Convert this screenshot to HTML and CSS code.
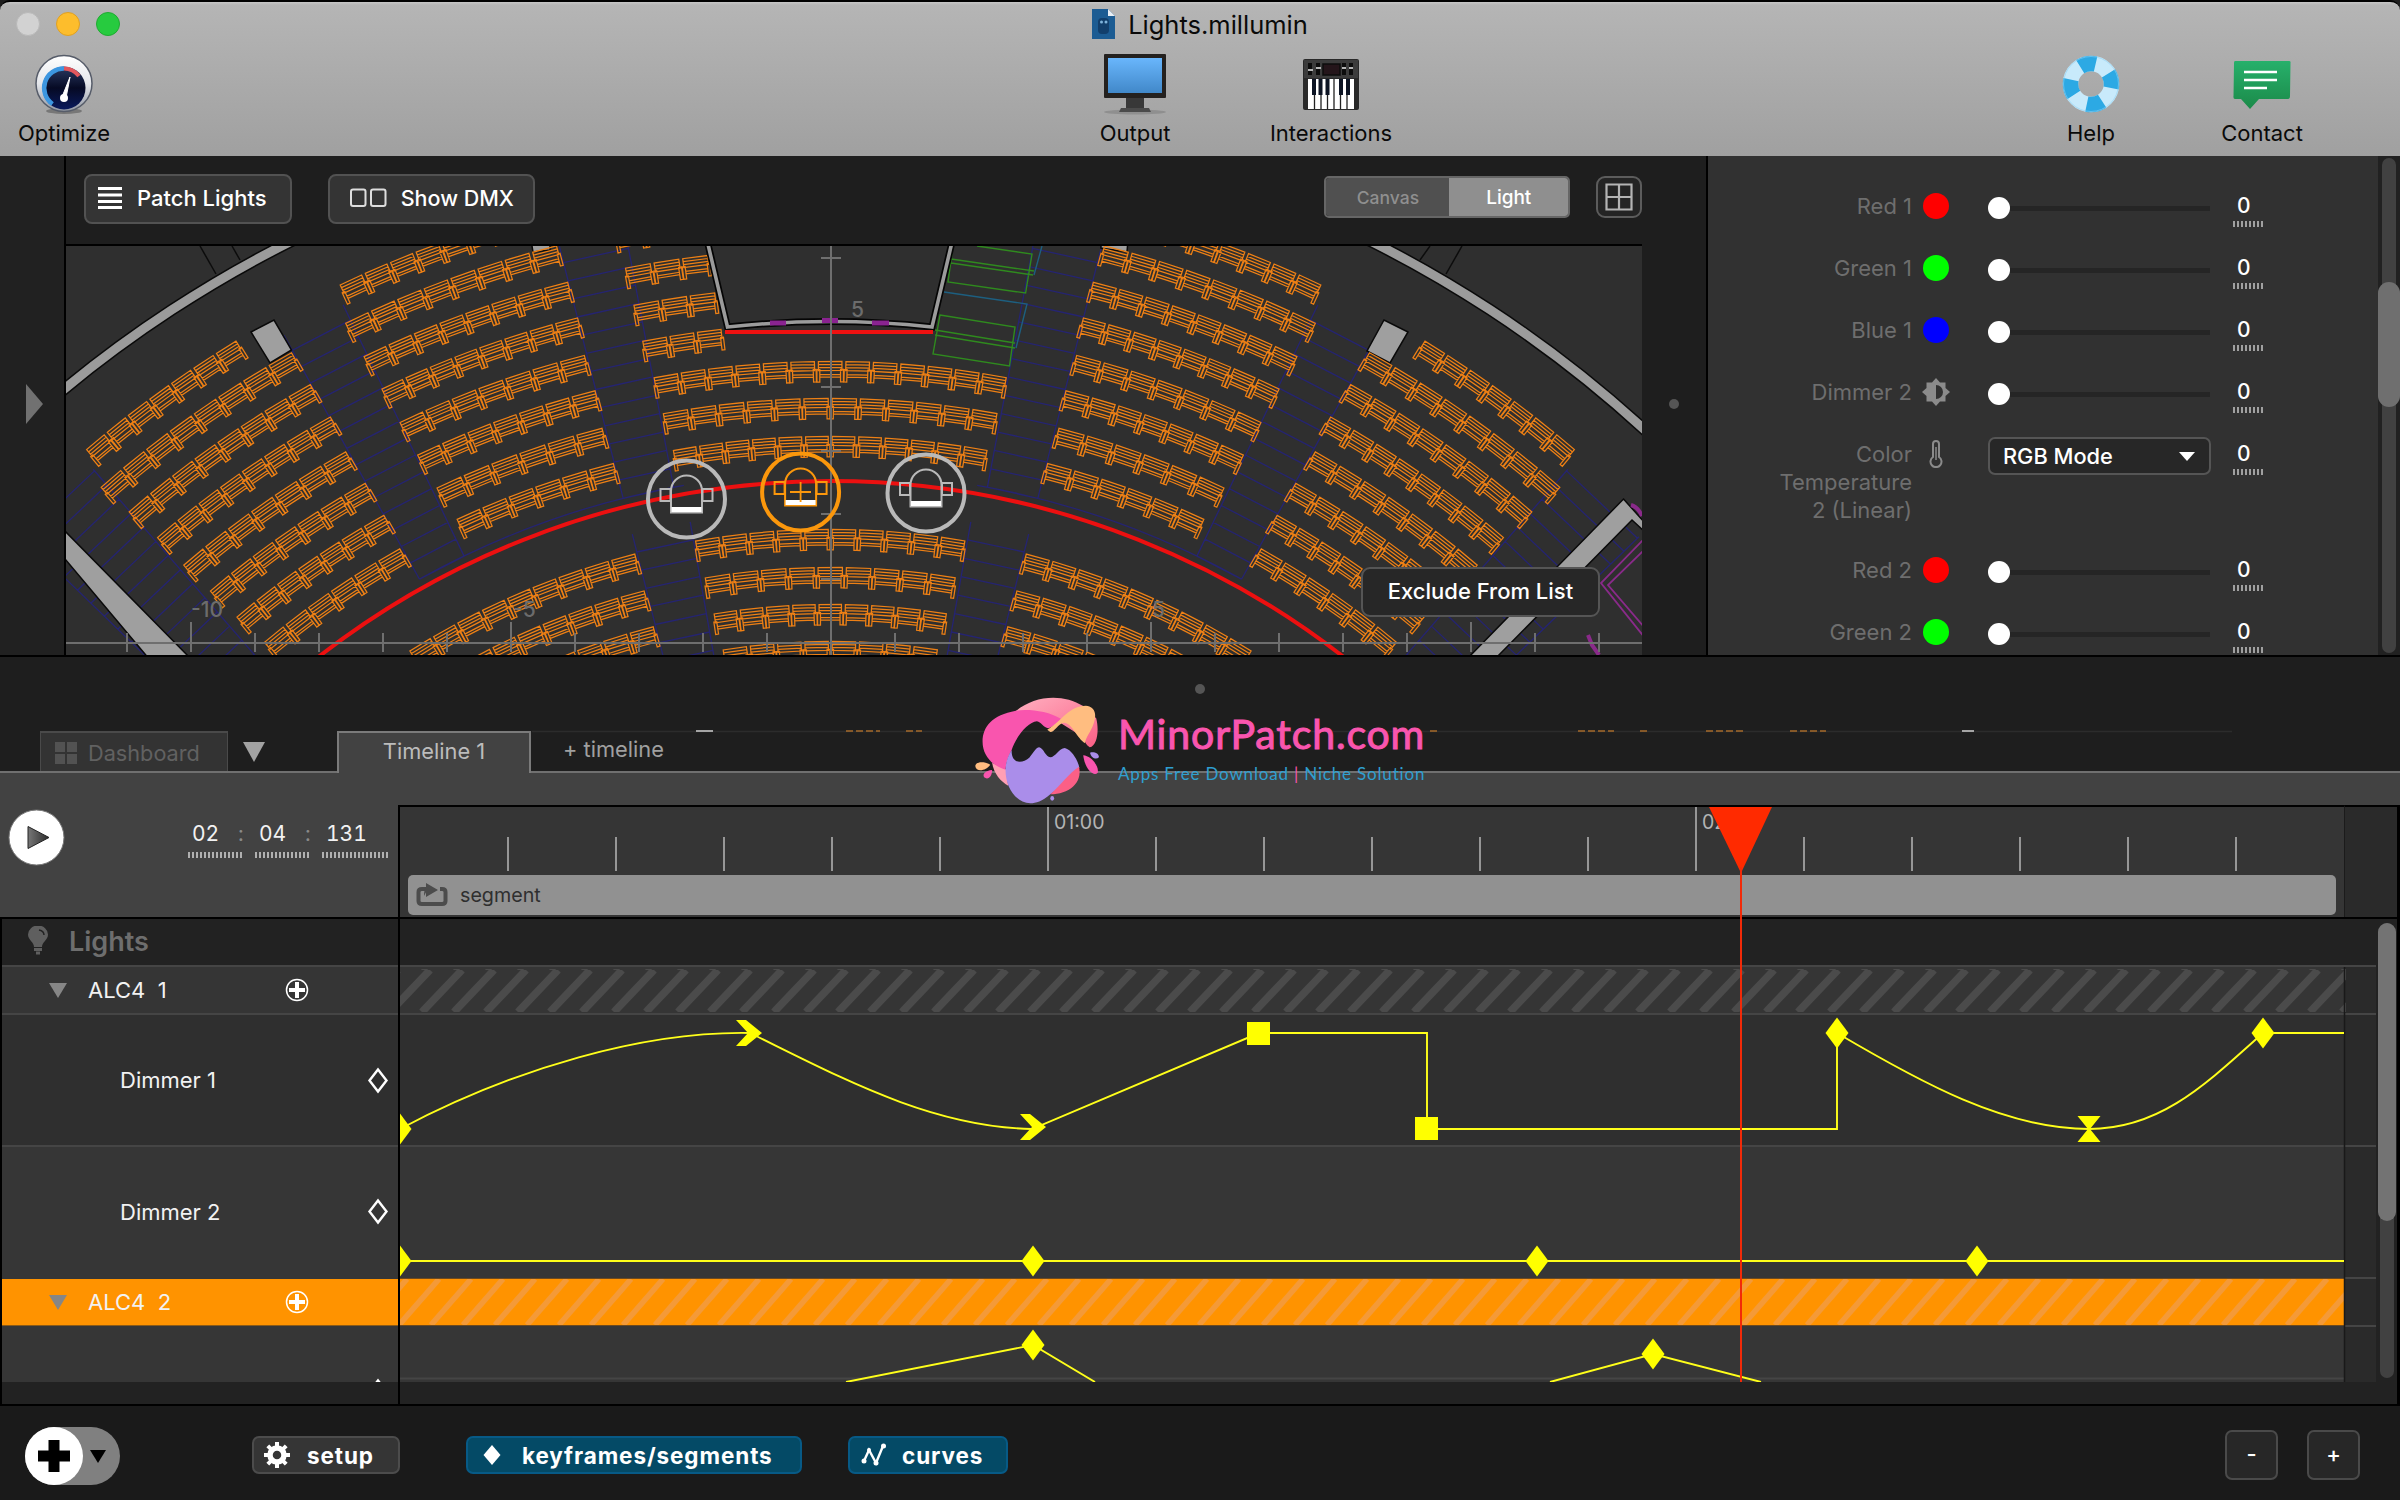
FILE: index.html
```html
<!DOCTYPE html>
<html lang="en">
<head>
<meta charset="utf-8">
<title>Lights.millumin</title>
<link rel="stylesheet" href="styles.css">
</head>
<body>
<div class="window">
  <header class="titlebar">
    <div class="title-row">
      <div class="traffic"><i class="close"></i><i class="min"></i><i class="max"></i></div>
      <div class="title">
        <svg width="24" height="30" viewBox="0 0 24 30"><path d="M0 0H16L23 7V30H0Z" fill="#1c5c93"/><path d="M16 0L23 7H16Z" fill="#e8eef4"/><rect x="6" y="9" width="11" height="16" rx="4" fill="#123f6c"/><circle cx="9.500" cy="13" r="1.500" fill="#7fb4dc"/><circle cx="14" cy="13" r="1.500" fill="#7fb4dc"/></svg>
        <span>Lights.millumin</span>
      </div>
      <div></div>
    </div>
    <nav class="tools">
      <div class="tool optimize">
        <svg width="60" height="62" viewBox="0 0 60 62"><defs><linearGradient id="rim" x2="0" y2="1"><stop offset="0" stop-color="#fff"/><stop offset=".5" stop-color="#e4e6ea"/><stop offset="1" stop-color="#9096a2"/></linearGradient><linearGradient id="dial" x2="0" y2="1"><stop offset="0" stop-color="#2a3a63"/><stop offset=".5" stop-color="#060a24"/><stop offset="1" stop-color="#0a1a5c"/></linearGradient></defs><ellipse cx="30" cy="58" rx="18" ry="3" fill="#777"/><circle cx="30" cy="30.500" r="28" fill="url(#rim)" stroke="#565c69" stroke-width="1.500"/><circle cx="30" cy="35" r="21.500" fill="url(#dial)"/><path d="M18.500 51A19.500 19.500 0 0 1 30 15.500" fill="none" stroke="#3c96e0" stroke-width="4.500"/><path d="M30 15.500A19.500 19.500 0 0 1 45 23" fill="none" stroke="#e2575d" stroke-width="4"/><path d="M36 24L28 44L32 45Z" fill="#fff" stroke="#fff"/><circle cx="30" cy="45" r="4" fill="#fff"/></svg>
        <span>Optimize</span>
      </div>
      <div class="tool output">
        <svg width="62" height="62" viewBox="0 0 62 62"><defs><linearGradient id="scr" x2="0" y2="1"><stop offset="0" stop-color="#69b6fc"/><stop offset="1" stop-color="#4188c9"/></linearGradient></defs><ellipse cx="31" cy="59" rx="31" ry="2.500" fill="#8f8f8f"/><rect x="0" y="1" width="62" height="44" rx="1" fill="#24211f"/><rect x="4" y="5" width="54" height="35" fill="url(#scr)"/><rect x="22" y="45" width="18" height="10" fill="#383838"/><path d="M17 55H45L47 59H15Z" fill="#4b4b4b"/></svg>
        <span>Output</span>
      </div>
      <div class="tool inter">
        <svg width="56" height="62" viewBox="0 0 56 62"><rect y="6" width="56" height="51" rx="2" fill="#292929"/><rect x="1" y="7" width="54" height="18" fill="#3c3c3c"/><rect x="20" y="11" width="17" height="11" fill="#24151a" stroke="#0c0c0c" stroke-width="1.500"/><path d="M7 10V22M15 10V22M41 10V22M48 10V22" stroke="#0d0d0d" stroke-width="4"/><path d="M5 17H10M13 15H18M39 15H43M46 15H50" stroke="#b5b5b5" stroke-width="2"/><path d="M5 26H51V56H5Z" fill="#fff"/><path d="M11.500 26V56M18 26V56M24.500 26V56M31 26V56M37.500 26V56M44 26V56" stroke="#222" stroke-width="1.300"/><path d="M11 26V42M17.500 26V42M24.500 26V42M38 26V42M45 26V42" stroke="#0c1424" stroke-width="4"/></svg>
        <span>Interactions</span>
      </div>
      <div class="tool help">
        <svg width="58" height="62" viewBox="0 0 58 62"><circle cx="29" cy="31" r="20.500" fill="none" stroke="#c8eafb" stroke-width="15.500"/><circle cx="29" cy="31" r="20.500" fill="none" stroke="#2ca9e4" stroke-width="15.500" stroke-dasharray="16.100" stroke-dashoffset="12"/><circle cx="29" cy="31" r="27.500" fill="none" stroke="#8fd0f2" stroke-width="1" opacity=".6"/></svg>
        <span>Help</span>
      </div>
      <div class="tool contact">
        <svg width="58" height="62" viewBox="0 0 58 62"><defs><linearGradient id="msg" x2="0" y2="1"><stop offset="0" stop-color="#27b06b"/><stop offset="1" stop-color="#1b8a49"/></linearGradient></defs><path d="M2 8H56Q58 8 57.500 10L57 43Q57 46 55 46H26L17 56L8 46H2Q0 46 .5 43L1 10Q1 8 2 8Z" fill="url(#msg)"/><path d="M11 19H44M11 27H44M11 35H34" stroke="#fff" stroke-width="2.600"/></svg>
        <span>Contact</span>
      </div>
    </nav>
  </header>

  <section class="upper">
    <aside class="strip"><svg width="18" height="40" viewBox="0 0 18 40"><path d="M0 0L17 20L0 40Z" fill="#717171"/></svg></aside>
    <main class="viewer">
      <div class="viewbar">
        <button class="btn patch"><svg width="24" height="22" viewBox="0 0 24 22"><path d="M0 1.500H24M0 8H24M0 14.500H24M0 20.500H24" stroke="#fff" stroke-width="3"/></svg><span>Patch Lights</span></button>
        <button class="btn dmx"><svg width="38" height="20" viewBox="0 0 38 20"><rect x="1" y="1.500" width="14.500" height="16.500" rx="2" fill="none" stroke="#ddd" stroke-width="2"/><rect x="21" y="1.500" width="14.500" height="16.500" rx="2" fill="none" stroke="#ddd" stroke-width="2"/></svg><span>Show DMX</span></button>
        <div class="seg"><span>Canvas</span><span class="on">Light</span></div>
        <button class="gridbtn"><svg width="28" height="28" viewBox="0 0 28 28"><path d="M1.500 1.500H26.500V26.500H1.500ZM14 1.500V26.500M1.500 14H26.500" fill="none" stroke="#b4b4b4" stroke-width="2.200"/></svg></button>
      </div>
      <div class="stage">
        <svg class="plan" width="1576" height="409" viewBox="66 246 1576 409">
          <g fill="none" stroke="#0c0c0c" stroke-width="1.500"><path d="M200 246L216 274M232 246L240 260M1462 246L1446 274M1430 246L1420 260"/></g>
          <g id="steps" fill="none" stroke="#252472" stroke-width="1.300"></g>
          <circle cx="831" cy="1318" r="1204.500" fill="none" stroke="#0a0a0a" stroke-width="12"/>
          <circle cx="831" cy="1318" r="1204.500" fill="none" stroke="#9b9b9b" stroke-width="9"/>
          <g fill="#9f9f9f" stroke="#0a0a0a" stroke-width="1.500">
            <path d="M60 526V553L150 660H192Z"/>
            <path d="M1623.500 499L1645 523V532L1632 520L1494 660H1466Z"/>
            <path d="M251 332L274 320L291.500 350L270 363Z"/><path d="M1408 332L1384 320L1367 351L1390 363Z"/>
            <path d="M531 240H550V250L533 252ZM1128 240H1101V248L1127 252Z"/>
          </g>
          <g fill="none" stroke="#8a2a8a" stroke-width="1.800"><path d="M1645 538L1601 583L1645 638M1645 549L1608 585L1645 628"/><path d="M1631 505Q1638 507 1642 516M1588 635L1592 645L1599 655" stroke-width="4"/></g>
          <g fill="none" stroke="#2f8a1e" stroke-width="1.400"><path d="M977 246L1032 254L1025.600 293L948 282L953 246M951 259L1034 271M951 263L1033 275M940 315L1015 327L1009.500 366L933 354ZM935 330L1015 343M935 335L1015 348"/></g>
          <path d="M944 292L1027 304L1016 348M1042 246L1034 275" fill="none" stroke="#1d5f80" stroke-width="1.400"/>
          <g id="seats" fill="none" stroke="#ee8015" stroke-width="1.250"></g>
          <path d="M707 240L727.500 327Q831 316 932 327L952.500 240" fill="none" stroke="#050505" stroke-width="7"/>
          <path d="M707 240L727.500 327Q831 316 932 327L952.500 240" fill="none" stroke="#9b9b9b" stroke-width="3.600"/>
          <path d="M770 323H786M822 320.500H838M872 323H889" stroke="#8a2390" stroke-width="5"/>
          <path d="M725 332H933" stroke="#ee1111" stroke-width="4"/>
          <circle cx="831" cy="1315" r="834" fill="none" stroke="#ec1010" stroke-width="4"/>
          <g stroke="#6f6f6f" stroke-width="2" fill="none"><path d="M831 246V655M66 643H1642"/><path id="axis"/></g>
          <g class="axis-label"><text x="851" y="317">5</text><text x="191" y="617">-10</text><text x="513" y="617">-5</text><text x="1152" y="617">5</text></g>
          <defs><g id="fixture"><circle r="38.500"/><path d="M-15.500 13.500V-8A15.500 15.500 0 0 1 15.500 -8V13.500Z" stroke-width="2"/><path d="M-26 -10H-16V2H-26ZM26 -10H16V2H26Z" stroke-width="2"/><path d="M-15 10.500H15" stroke="#fff" stroke-width="5"/></g></defs>
          <g fill="none" stroke="#b9b9b9" stroke-width="4"><use href="#fixture" x="686.500" y="499"/><use href="#fixture" x="926" y="493"/></g>
          <g fill="none" stroke="#fb970c" stroke-width="4"><use href="#fixture" x="800.600" y="492"/><path d="M790 492H811M800.600 482V502" stroke-width="1.800"/></g>
        </svg>
        <button class="exclude"><span>Exclude From List</span></button>
      </div>
    </main>
    <div class="gutter"><i></i></div>
    <aside class="panel">
      <div class="row"><label>Red 1</label><i class="dot red"></i><div class="slider"><i></i></div><div class="num">0</div></div>
      <div class="row"><label>Green 1</label><i class="dot green"></i><div class="slider"><i></i></div><div class="num">0</div></div>
      <div class="row"><label>Blue 1</label><i class="dot blue"></i><div class="slider"><i></i></div><div class="num">0</div></div>
      <div class="row"><label>Dimmer 2</label><svg class="ico" width="28" height="28" viewBox="-14 -14 28 28"><path d="M0 -14L4 -9.500H9.500V-4L14 0L9.500 4V9.500H4L0 14L-4 9.500H-9.500V4L-14 0L-9.500 -4V-9.500H-4Z" fill="#8b8b8b"/><path d="M0 -7A7 7 0 0 1 0 7Z" fill="#313131"/></svg><div class="slider"><i></i></div><div class="num">0</div></div>
      <div class="row tall"><label>Color<br>Temperature<br>2 (Linear)</label><svg class="ico" width="28" height="28" viewBox="-14 -14 28 28"><path d="M-3 3V-10A3 3 0 0 1 3 -10V3A5.500 5.500 0 1 1 -3 3Z" fill="none" stroke="#8b8b8b" stroke-width="2"/><path d="M0 -7V6" stroke="#8b8b8b" stroke-width="1.500"/></svg><div class="select"><span>RGB Mode</span><svg width="16" height="9" viewBox="0 0 16 9"><path d="M0 0H16L8 9Z" fill="#fff"/></svg></div><div class="num">0</div></div>
      <div class="row"><label>Red 2</label><i class="dot red"></i><div class="slider"><i></i></div><div class="num">0</div></div>
      <div class="row"><label>Green 2</label><i class="dot green"></i><div class="slider"><i></i></div><div class="num">0</div></div>
    </aside>
    <div class="pscroll"><i></i></div>
  </section>

  <section class="tabs-area">
    <div class="split"><i></i></div>
    <svg class="residue" width="1700" height="3" viewBox="532 730 1700 3"><path d="M532 731.500H2232" stroke="#2c2c2c" stroke-width="1.500"/><path d="M696 731H713M1962 731H1974" stroke="#a5a5a5" stroke-width="2"/><path d="M846 731H880M906 731H922M1430 731H1440M1578 731H1614M1640 731H1650M1706 731H1745M1790 731H1826" stroke="#a5692a" stroke-width="1.500" stroke-dasharray="7 3"/></svg>
    <div class="tabs">
      <div class="tab dash"><svg width="22" height="22" viewBox="0 0 22 22"><path d="M0 0H10V10H0ZM12 0H22V10H12ZM0 12H10V22H0ZM12 12H22V22H12Z" fill="#525252"/></svg><span>Dashboard</span></div>
      <svg class="caret" width="22" height="20" viewBox="0 0 22 20"><path d="M0 0H22L11 20Z" fill="#a2a2a2"/></svg>
      <div class="tab active"><span>Timeline 1</span></div>
      <div class="addtab"><span>+ timeline</span></div>
    </div>
    <div class="logo">
      <svg width="128" height="110" viewBox="0 0 334.500 330" preserveAspectRatio="none"><g transform="translate(-190 -78)">
        <defs><linearGradient id="lg1" x2="1" y2="1"><stop offset="0" stop-color="#ffb0c0"/><stop offset="1" stop-color="#fb5f86"/></linearGradient></defs>
        <path d="M300 125C350 75 425 70 478 108L512 145C520 180 515 228 495 232C485 225 481 215 482 205L420 160Z" fill="url(#lg1)"/>
        <path d="M240 278L276 298L282 347C262 334 244 310 240 278Z" fill="#ff9fb4"/>
        <path d="M422 148C385 122 335 117 302 122C240 135 215 170 215 215C215 255 240 288 275 299C277 275 282 260 291 240C302 200 335 155 357 154C368 155 374 174 387 175C402 170 412 158 422 148Z" fill="#f955ae"/>
        <path d="M384 179C425 150 440 108 485 107C513 110 512 140 506 158C497 190 484 200 483 220C462 205 448 158 428 158C412 160 403 187 392 186Z" fill="#ffbd80"/>
        <path d="M291 240C290 282 318 282 337 263C350 245 355 232 363 232C375 235 380 262 392 262C405 262 415 234 430 234C450 240 465 275 468 293C450 310 420 350 392 373C370 395 355 400 340 400C300 398 275 350 275 300C275 280 280 260 291 240Z" fill="#aa8dea"/>
        <path d="M467 290C477 340 440 372 392 373C420 345 440 310 467 290Z" fill="#fb5f86"/>
        <path d="M196 288C198 272 225 276 235 284C225 302 198 308 196 288Z" fill="#ffbd80"/><path d="M240 300C222 302 214 312 219 322C230 332 240 318 240 300Z" fill="#f955ae"/>
        <path d="M478 256C500 258 520 290 516 308C505 322 482 296 478 256Z" fill="#f955ae"/><path d="M496 248C505 244 520 250 519 262C512 270 498 264 496 248Z" fill="#aa8dea"/><ellipse cx="397" cy="385" rx="5" ry="7" fill="#aa8dea"/>
      </g></svg>
      <div class="logo-text"><strong>MinorPatch.com</strong><em>Apps Free Download <b>|</b> Niche Solution</em></div>
    </div>
  </section>

  <section class="timeline">
    <div class="head">
      <div class="transport">
        <svg class="play" width="57" height="59" viewBox="0 0 57 59"><defs><linearGradient id="pl" x2="1"><stop offset="0" stop-color="#777"/><stop offset="1" stop-color="#2b2b2b"/></linearGradient></defs><circle cx="28.500" cy="29.500" r="27.500" fill="#fff" stroke="#777" stroke-width="1"/><path d="M20 18.500V40.500L41 29.500Z" fill="url(#pl)" stroke="#222"/></svg>
        <div class="time"><span class="n2">02</span><u>:</u><span class="n2">04</span><u>:</u><span class="n3">131</span></div>
      </div>
      <div class="ruler">
        <svg width="1944" height="68" viewBox="400 807 1944 68"><path id="ticks" stroke="#969696" stroke-width="2"/><g class="rlabel"><text x="1054" y="829">01:00</text><text x="1702" y="829">02:00</text></g></svg>
        <div class="segment"><svg width="32" height="24" viewBox="0 0 32 24"><path d="M11 6H6Q2.500 6 2.500 9V18Q2.500 21 6 21H26Q29.500 21 29.500 18V9Q29.500 6 26 6H24" fill="none" stroke="#4c4c4c" stroke-width="4"/><path d="M10 6H12Q10 9 8 13Q8 6 10 4.500V0L22 7L10 14Z" fill="#4c4c4c"/></svg><span>segment</span></div>
      </div>
      <div class="ruler-end"></div>
    </div>
    <div class="body">
      <div class="names">
        <div class="name group"><svg width="22" height="30" viewBox="0 0 22 30"><path d="M7 21C7 16 1 14 1 8.500A10 9 0 0 1 21 8.500C21 14 15 16 15 21Z" fill="#5f5f5f"/><path d="M12 4Q17 5 17 9" fill="none" stroke="#222" stroke-width="1.500"/><path d="M7 23.500H15M9 27H13" stroke="#5f5f5f" stroke-width="3"/></svg><span>Lights</span></div>
        <div class="name light"><svg width="18" height="15" viewBox="0 0 18 15"><path d="M0 0H18L9 15Z" fill="#868686"/></svg><span>ALC4&nbsp; 1</span><svg class="add" width="24" height="24" viewBox="-12 -12 24 24"><circle r="10.500" fill="none" stroke="#fff" stroke-width="1.500"/><path d="M-8 0H8M0 -8V8" stroke="#fff" stroke-width="4"/></svg></div>
        <div class="name param"><span>Dimmer 1</span><svg width="22" height="27" viewBox="-11 -13.500 22 27"><path d="M0 -11L8.500 0L0 11L-8.500 0Z" fill="none" stroke="#fff" stroke-width="2.400"/></svg></div>
        <div class="name param even"><span>Dimmer 2</span><svg width="22" height="27" viewBox="-11 -13.500 22 27"><path d="M0 -11L8.500 0L0 11L-8.500 0Z" fill="none" stroke="#fff" stroke-width="2.400"/></svg></div>
        <div class="name light sel"><svg width="18" height="15" viewBox="0 0 18 15"><path d="M0 0H18L9 15Z" fill="#868686"/></svg><span>ALC4&nbsp; 2</span><svg class="add" width="24" height="24" viewBox="-12 -12 24 24"><circle r="10.500" fill="none" stroke="#fff" stroke-width="1.500"/><path d="M-8 0H8M0 -8V8" stroke="#fff" stroke-width="4"/></svg></div>
        <div class="name last"><svg width="22" height="27" viewBox="-11 -13.500 22 27"><path d="M0 -11L8.500 0L0 11L-8.500 0Z" fill="none" stroke="#fff" stroke-width="2.400"/></svg></div>
      </div>
      <svg class="tracks" width="1978" height="485" viewBox="400 919 1978 485">
        <defs>
          <pattern id="hatch" width="32" height="42" patternUnits="userSpaceOnUse" x="422" y="970"><path d="M0 42L40 0M-32 42L8 0M32 42L72 0M-64 42L-24 0" stroke="#4b4b4b" stroke-width="7.500"/></pattern>
          <pattern id="hatchSel" width="32" height="46" patternUnits="userSpaceOnUse" x="431" y="1279"><path d="M0 46L40 0M-32 46L8 0M32 46L72 0M-64 46L-24 0" stroke="#f49a38" stroke-width="5.500"/></pattern>
          <path id="kd" d="M0 -15.500L11.500 0L0 15.500L-11.500 0Z"/><path id="ks" d="M-11 -11H12V12H-11Z"/><path id="kc" d="M-13 -13H-3L13 0L-3 13H-13L-1 0Z"/><path id="kh" d="M-11.500 -13H11.500L1 0L11.500 13H-11.500L-1 0Z"/>
        </defs>
        <rect x="400" y="919" width="1978" height="485" fill="#222"/>
        <rect x="400" y="967" width="1944" height="47" fill="#353535"/><rect x="2344" y="967" width="32" height="415" fill="#2a2a2a"/>
        <rect x="400" y="969" width="1946" height="43" fill="url(#hatch)"/>
        <rect x="400" y="1015" width="1944" height="131" fill="#2f2f2f"/>
        <rect x="400" y="1147" width="1944" height="132" fill="#363636"/>
        <rect x="400" y="1326" width="1944" height="56" fill="#363636"/>
        <path d="M400 966H2376M400 1014H2376M400 1146H2376M2344 1278H2376M2344 1326H2376M400 1378.500H2344" stroke="#454545" stroke-width="2"/>
        <rect x="400" y="1278" width="1944" height="48" fill="#ff9300"/><rect x="400" y="1279" width="1944" height="46" fill="url(#hatchSel)"/>
        <path d="M400 1278.500H2344M400 1325.500H2344" stroke="#6e4a1e" stroke-width="1"/>
        <path d="M2344.500 967V1382" stroke="#191919" stroke-width="1.500"/>
        <svg x="400" y="919" width="1944" height="463" viewBox="400 919 1944 463">
          <g fill="none" stroke="#ffff1a" stroke-width="1.900">
            <path d="M400 1129C515 1068 645 1031 750 1033C840 1077 930 1127 1032 1129L1259 1033H1427V1129H1837V1033C1920 1082 2005 1129 2089 1129C2160 1129 2205 1085 2263 1033H2344"/>
            <path d="M400 1261H2344"/><path d="M846 1382L1033 1345L1095 1382M1550 1382L1653 1354L1761 1382"/>
          </g>
          <g fill="#ffff00"><use href="#kd" x="400" y="1129"/><use href="#kc" x="749" y="1033"/><use href="#kc" x="1033" y="1127"/><use href="#ks" x="1258" y="1033"/><use href="#ks" x="1426" y="1128"/><use href="#kd" x="1837" y="1033"/><use href="#kh" x="2089" y="1129"/><use href="#kd" x="2263" y="1033"/><use href="#kd" x="400" y="1261"/><use href="#kd" x="1033" y="1261"/><use href="#kd" x="1537" y="1261"/><use href="#kd" x="1977" y="1261"/><use href="#kd" x="1033" y="1345"/><use href="#kd" x="1653" y="1354"/></g>
        </svg>
      </svg>
      <div class="tscroll"><i></i></div>
    </div>
    <svg class="playhead" width="64" height="575" viewBox="0 0 64 575"><path d="M0 0H63L32 66Z" fill="#ff2a00"/><path d="M32 60V575" stroke="#f22a08" stroke-width="2"/></svg>
  </section>

  <footer class="footer">
    <div class="adder"><svg width="95" height="58" viewBox="0 0 95 58"><rect width="95" height="58" rx="29" fill="#808080"/><circle cx="29" cy="29" r="29" fill="#fff"/><path d="M13 29H45M29 13V45" stroke="#000" stroke-width="11"/><path d="M65 23H81L73 36Z" fill="#000"/></svg></div>
    <button class="fbtn setup"><svg width="28" height="28" viewBox="-14 -14 28 28"><circle r="7" fill="none" stroke="#fff" stroke-width="5.500"/><path d="M0 -8V-13M0 8V13M8 0H13M-8 0H-13M5.700 5.700L9.200 9.200M-5.700 -5.700L-9.200 -9.200M5.700 -5.700L9.200 -9.200M-5.700 5.700L-9.200 9.200" stroke="#fff" stroke-width="4"/></svg><span>setup</span></button>
    <button class="fbtn keys"><svg width="18" height="20" viewBox="0 0 18 20"><path d="M9 0L17.500 10L9 20L.5 10Z" fill="#fff"/></svg><span>keyframes/segments</span></button>
    <button class="fbtn curves"><svg width="26" height="24" viewBox="0 0 26 24"><path d="M3 18L8 7L15 20L22 3" fill="none" stroke="#fff" stroke-width="2.400"/><circle cx="3" cy="18" r="2.500" fill="#fff"/><circle cx="8" cy="7" r="2" fill="#fff"/><circle cx="15" cy="20" r="2.500" fill="#fff"/><circle cx="22.500" cy="3" r="2.500" fill="#fff"/></svg><span>curves</span></button>
    <button class="sq minus">-</button><button class="sq">+</button>
  </footer>
</div>
<script src="plan.js"></script>
</body>
</html>
```
FILE: plan.js
```js
const CX = 830.5, CY = 1317.5;
const rad = d => d * Math.PI / 180;

// Each row: radius, first angle, last angle (degrees left of the centre line), seats
const outer = [[1143,40.6,31.3,7],[1105,41.3,29.15,8],[1068,41.05,29.1,8],[1030,40.8,29,8],[992,40.7,29.2,7],[955,40.5,29.1,7],[918,40.3,29.05,7],[881,40,29.2,6]];
const middle = [[1143,25.4,14.5,8],[1106,26,14.3,8],[1068,25.9,14.2,8],[1031,25.8,14.15,8],[993,25.7,14.3,7],[956,25.6,14.2,7],[918,25.4,14.35,6],[881,25.1,14.2,6],[788,32.3,14.3,9],[750,28.9,14.3,7],[713,27.5,14.3,6]];
const centre = [[956,10.65,-10.65,13],[919,10.5,-10.5,12],[881,10.3,-10.3,12],[788,9.9,-9.9,10],[750,9.66,-9.66,9],[713,9.45,-9.45,9],[676,9.2,-9.2,8]];
const stageLeft = [[1106,11.2,6.7,3],[1069,11.06,6.56,3],[1031,11,6.4,3],[994,10.9,6.27,3]];

function seat(w) {
  const h = w / 2;
  return `M${-h+2} 9V0H${h-2}V9ZM${-h+2} 3H${h-2}M${-h+2} 6H${h-2}M${-h+3} 13H${h-3}M${-h+3} 15.500H${h-3}` +
    `M${-h+.5} 8H${-h+3.4}V20.500H${-h+.5}ZM${h-3.4} 8H${h-.5}V20.500H${h-3.4}Z`;
}
function drawRow([r, a, b, n], sign) {
  let out = '';
  a += .1; b -= .06;
  const step = (a - b) / n, w = r * rad(step);
  for (let i = 0; i < n; i++) {
    const t = a - step * (i + .5);
    out += `<path d="${seat(w)}" transform="translate(${CX} ${CY}) rotate(${-t * sign}) translate(0 ${-r})"/>`;
  }
  return out;
}
let s = '';
for (const row of [...outer, ...middle]) s += drawRow(row, 1) + drawRow(row, -1);
for (const row of [...centre, ...stageLeft]) s += drawRow(row, 1);
document.getElementById('seats').innerHTML = s;

// Aisle steps: [outer angle, inner angle, first radius, last radius]
const aisles = [[29.1,25.7,845,1124],[14.2,10.7,845,1180],[46,41,860,1124],[14.2,10,640,808]];
const pt = (r, a) => `${(CX - r * Math.sin(rad(a))).toFixed(1)} ${(CY - r * Math.cos(rad(a))).toFixed(1)}`;
let d = '';
for (const [a, b, r0, r1] of aisles) for (const m of [1, -1]) {
  for (let r = r0; r <= r1; r += 18.7) d += `M${pt(r, a * m)}L${pt(r, b * m)}`;
  d += `M${pt(r0, a * m)}L${pt(r1, a * m)}M${pt(r0, b * m)}L${pt(r1, b * m)}`;
}
d += `M${pt(845, 29)}A845 845 0 0 1 ${pt(845, 10)}M${pt(845, -10)}A845 845 0 0 1 ${pt(845, -29)}`;
document.getElementById('steps').innerHTML = `<path d="${d}"/>`;

let ax = '';
for (let k = -11; k <= 12; k++) if (k) ax += `M${831 + 64 * k} ${k % 5 ? 633 : 622}V652`;
for (const y of [258, 387, 451, 514, 579]) ax += `M821 ${y}H841`;
document.getElementById('axis').setAttribute('d', ax);

let tk = '';
for (let k = 1; k <= 17; k++) tk += `M${(400 + 108 * k).toFixed(0)} ${k % 6 ? 837 : 807}V871`;
document.getElementById('ticks').setAttribute('d', tk);
```
FILE: styles.css
```css
* { box-sizing: border-box; }
body { margin: 0; background: #000; font-family: Inter, "Liberation Sans", sans-serif; overflow: hidden; }
svg { display: block; flex: none; }
button { font: inherit; color: #fff; margin: 0; padding: 0; }
.window { width: 2400px; height: 1500px; display: flex; flex-direction: column; background: #1e1e1e; overflow: hidden; white-space: nowrap; }

.titlebar { height: 156px; flex: none; border-top: 2px solid #000; background: linear-gradient(#c6c6c6 0, #b5b5b5 3px, #a0a0a0); border-radius: 10px 10px 0 0; color: #0a0a0a; }
.title-row { height: 44px; display: grid; grid-template-columns: 1fr auto 1fr; align-items: center; }
.traffic { display: flex; gap: 16px; padding-left: 16px; }
.traffic i { width: 24px; height: 24px; border-radius: 50%; }
.close { background: #d2d2d2; border: 1px solid #b9b9b9; }
.min { background: #fdbd2c; border: 1px solid #dfa023; }
.max { background: #27cb3f; border: 1px solid #1fab31; }
.title { display: flex; align-items: center; gap: 12px; font-size: 25.500px; }
.tools { display: flex; padding-left: 4px; }
.tool { width: 120px; display: flex; flex-direction: column; align-items: center; gap: 5px; font-size: 22px; padding-top: 7px; }
.output { margin-left: 951px; }
.inter { margin-left: 76px; }
.help { margin-left: 640px; }
.contact { margin-left: 51px; }

.upper { height: 501px; flex: none; display: flex; border-bottom: 2px solid #000; }
.strip { width: 66px; background: #212121; border-right: 2px solid #000; display: flex; align-items: center; padding: 0 0 4px 26px; }
.viewer { width: 1576px; display: flex; flex-direction: column; }
.viewbar { height: 90px; border-bottom: 2px solid #000; display: flex; align-items: flex-start; padding: 18px 0 0 18px; }
.btn { height: 50px; width: 208px; border: 2px solid #525252; border-radius: 8px; background: #343434; font-size: 22px; font-weight: 500; display: flex; align-items: center; padding-bottom: 2px; }
.patch { padding-left: 12px; gap: 15px; }
.dmx { margin-left: 36px; padding-left: 20px; gap: 13px; font-size: 21.500px; }
.seg { margin: 2px 0 0 789px; width: 246px; height: 42px; display: flex; border: 2px solid #666; border-radius: 5px; overflow: hidden; font-size: 17.500px; font-weight: 500; }
.seg span { width: 123px; background: #505050; color: #8f8f8f; display: flex; align-items: center; justify-content: center; }
.seg .on { flex: 1; background: #8f8f8f; color: #fff; font-size: 19px; }
.gridbtn { margin: 2px 0 0 26px; width: 46px; height: 42px; border: 2px solid #5c5c5c; border-radius: 9px; background: #242424; display: flex; align-items: center; justify-content: center; }
.stage { position: relative; height: 409px; background: #2f2f2f; overflow: hidden; }
.axis-label { font-size: 21px; fill: #6c6c6c; font-weight: 500; }
.exclude { position: absolute; left: 1295px; top: 321px; width: 239px; height: 50px; border: 2px solid #555; border-radius: 9px; background: #272727; font-size: 22px; font-weight: 500; padding-bottom: 2px; }
.gutter { width: 64px; display: flex; align-items: center; justify-content: center; padding-bottom: 3px; }
.gutter i, .split i { width: 10px; height: 10px; border-radius: 50%; background: #555; }
.panel { width: 672px; border-left: 2px solid #000; background: #313131; padding-top: 31px; overflow: hidden; }
.row { height: 62px; display: flex; align-items: flex-start; padding-top: 5px; }
.row.tall { height: 116px; }
.row label { width: 204px; text-align: right; font-size: 22px; line-height: 28px; color: #6e6e6e; }
.dot { width: 26px; height: 26px; border-radius: 50%; margin: 1px 39px 0 11px; }
.ico { margin: 0 38px 0 10px; }
.red { background: #f00; } .green { background: #0f0; } .blue { background: #00f; }
.slider { width: 223px; height: 22px; margin-top: 5px; display: flex; align-items: center; background: linear-gradient(#252525, #252525) 11px 50% / 211px 5px no-repeat; }
.slider i { width: 22px; height: 22px; border-radius: 50%; background: #fff; }
.select { width: 223px; height: 38px; margin-top: -3px; border: 2px solid #555; border-radius: 7px; background: #272727; color: #fff; font-size: 21.800px; font-weight: 500; display: flex; align-items: center; justify-content: space-between; padding: 0 14px 0 13px; }
.num { margin-left: 22px; width: 30px; height: 36px; line-height: 28px; padding-left: 4px; font-size: 21px; font-weight: 500; color: #fff; background: repeating-linear-gradient(90deg, #a0a0a0 0 2px, transparent 2px 4px) 0 29px / 30px 6px no-repeat; }
.pscroll { width: 22px; background: #212121; padding: 2px 0; position: relative; }
.pscroll::before { content: ""; display: block; width: 14px; height: 495px; margin: 0 4px; border-radius: 7px; background: #414141; }
.pscroll i { position: absolute; left: 0; top: 126px; width: 22px; height: 125px; border-radius: 11px; background: #6f6f6f; }

.tabs-area { height: 148px; flex: none; position: relative; display: flex; flex-direction: column; background: #1e1e1e; }
.split { height: 74px; display: flex; justify-content: center; padding-top: 27px; }
.residue { position: absolute; left: 532px; top: 73px; }
.tabs { height: 42px; display: flex; border-bottom: 2px solid #707070; padding-left: 40px; flex: none; }
.tabs-area::after { content: ""; flex: 1; background: #424242; }
.tab { display: flex; align-items: center; }
.dash { width: 188px; background: #333; border: 1px solid #4a4a4a; border-top-width: 2px; border-bottom: 0; padding: 2px 0 0 14px; gap: 11px; font-size: 21.700px; color: #616161; }
.caret { margin: 11px 72px 0 15px; }
.active { width: 194px; height: 42px; background: #424242; border: 2px solid #7b7b7b; border-bottom: 0; justify-content: center; font-size: 21.800px; color: #bcbcbc; padding-bottom: 4px; }
.addtab { padding-left: 32px; font-size: 21.800px; line-height: 37px; color: #a0a0a0; }
.logo { position: absolute; left: 973px; top: 39px; display: flex; z-index: 2; }
.logo-text { padding: 13px 0 0 17px; display: flex; flex-direction: column; }
.logo-text strong { font: 400 41px/50px Lato, sans-serif; letter-spacing: .850px; color: #f955ae; -webkit-text-stroke: 1px #f955ae; }
.logo-text em { font: 400 17px/24px Lato, sans-serif; color: #2f9fd0; margin-top: 3px; letter-spacing: .820px; }
.logo-text em b { font-weight: 400; color: #f955ae; }

.timeline { height: 601px; flex: none; position: relative; border-bottom: 2px solid #000; }
.head { height: 114px; display: flex; border-bottom: 2px solid #000; }
.transport { width: 400px; background: #424242; border-right: 2px solid #000; display: flex; padding: 3px 0 0 8px; }
.time { display: flex; margin-left: 123px; color: #f2f2f2; font-size: 21px; line-height: 30px; padding-top: 11px; font-feature-settings: "tnum"; }
.time span { height: 39px; padding-left: 4px; background: repeating-linear-gradient(90deg, #b0b0b0 0 2px, transparent 2px 4px) 0 33px / 100% 6px no-repeat; }
.n2 { width: 54px; } .n3 { width: 67px; }
.time u { width: 13px; text-decoration: none; color: #8a8a8a; text-indent: -4px; }
.ruler { width: 1944px; background: #353535; border-top: 2px solid #000; display: flex; flex-direction: column; }
.rlabel { font-size: 19.500px; fill: #b4b4b4; }
.segment { margin: 0 8px; height: 40px; border-radius: 5px; background: #919191; color: #2f2f2f; font-size: 19.700px; display: flex; align-items: center; padding-left: 8px; gap: 12px; }
.ruler-end { width: 56px; background: #2a2a2a; border-top: 2px solid #000; border-right: 3px solid #000; border-left: 1px solid #1b1b1b; }
.body { height: 485px; display: flex; background: #222; }
.names { width: 400px; border-left: 2px solid #000; border-right: 2px solid #000; color: #f2f2f2; font-size: 22px; }
.name { display: flex; align-items: center; border-bottom: 2px solid #454545; background: #353535; }
.group { height: 48px; background: #222; color: #6e6e6e; font-weight: 600; font-size: 27px; padding: 0 0 2px 25px; gap: 20px; }
.light { height: 48px; padding-left: 47px; gap: 22px; }
.light span { width: 175px; }
.param { height: 132px; background: #2f2f2f; padding-left: 118px; justify-content: space-between; padding-right: 9px; }
.even { background: #363636; border-bottom: 0; padding-bottom: 3px; }
.sel { background: #ff9300; border-bottom: 1px solid #8a5a18; height: 47px; }
.light span, .sel span { margin-left: -1px; }
.last { height: 56px; border: 0; background: #363636; overflow: hidden; align-items: flex-start; padding: 52px 9px 0 0; justify-content: flex-end; }
.tracks { width: 1978px; }
.tscroll { width: 22px; border-right: 3px solid #000; padding: 4px 0 0; position: relative; }
.tscroll::before { content: ""; display: block; width: 14px; height: 455px; margin-left: 2px; border-radius: 7px; background: #414141; }
.tscroll i { position: absolute; left: 0; top: 4px; width: 18px; height: 298px; border-radius: 9px; background: #737373; }
.playhead { position: absolute; left: 1709px; top: 2px; }

.footer { flex: 1; background: #1a1a1a; display: flex; align-items: flex-start; padding: 21px 0 0 25px; }
.fbtn { height: 38px; margin-top: 9px; border: 2px solid #4c4c4c; border-radius: 7px; background: #353535; font-size: 22.500px; letter-spacing: .900px; font-weight: 700; display: flex; align-items: center; }
.setup { width: 148px; margin-left: 132px; padding-left: 9px; gap: 16px; }
.keys, .curves { background: #044a66; border-color: #075a86; }
.keys { width: 336px; margin-left: 66px; padding-left: 15px; gap: 21px; }
.curves { width: 160px; margin-left: 46px; padding-left: 11px; gap: 15px; }
.sq { width: 53px; height: 50px; margin: 3px 0 0 29px; border: 2px solid #4a4a4a; border-radius: 7px; background: #272727; font-size: 22px; font-weight: 500; padding-bottom: 3px; }
.minus { margin-left: 1217px; }
```
